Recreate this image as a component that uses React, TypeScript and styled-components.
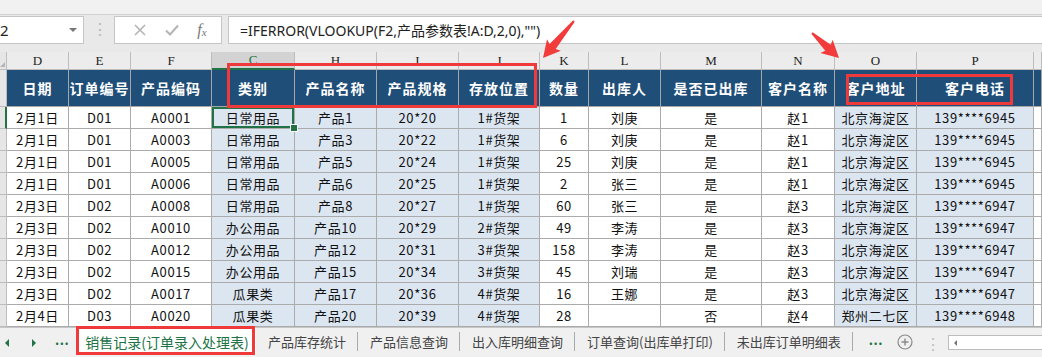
import { Fragment } from "react";
import styled, { createGlobalStyle } from "styled-components";

const GlobalStyle = createGlobalStyle`
  body {
    margin: 0;
    background: #e9e9e9;
    font-family: "Noto Sans", "Noto Sans CJK SC", sans-serif;
  }
`;

type Col = { letter: string; title: string; width: number; tint?: boolean };

const cols: Col[] = [
  { letter: "D", title: "日期", width: 62 },
  { letter: "E", title: "订单编号", width: 62 },
  { letter: "F", title: "产品编码", width: 81 },
  { letter: "C", title: "类别", width: 83, tint: true },
  { letter: "H", title: "产品名称", width: 82, tint: true },
  { letter: "I", title: "产品规格", width: 82, tint: true },
  { letter: "J", title: "存放位置", width: 81, tint: true },
  { letter: "K", title: "数量", width: 49 },
  { letter: "L", title: "出库人", width: 72 },
  { letter: "M", title: "是否已出库", width: 101 },
  { letter: "N", title: "客户名称", width: 73 },
  { letter: "O", title: "客户地址", width: 82, tint: true },
  { letter: "P", title: "客户电话", width: 117, tint: true },
];

const rows: string[][] = [
  ["2月1日", "D01", "A0001", "日常用品", "产品1", "20*20", "1#货架", "1", "刘庚", "是", "赵1", "北京海淀区", "139****6945"],
  ["2月1日", "D01", "A0003", "日常用品", "产品3", "20*22", "1#货架", "6", "刘庚", "是", "赵1", "北京海淀区", "139****6945"],
  ["2月1日", "D01", "A0005", "日常用品", "产品5", "20*24", "1#货架", "25", "刘庚", "是", "赵1", "北京海淀区", "139****6945"],
  ["2月1日", "D01", "A0006", "日常用品", "产品6", "20*25", "1#货架", "2", "张三", "是", "赵1", "北京海淀区", "139****6945"],
  ["2月3日", "D02", "A0008", "日常用品", "产品8", "20*27", "1#货架", "60", "张三", "是", "赵3", "北京海淀区", "139****6947"],
  ["2月3日", "D02", "A0010", "办公用品", "产品10", "20*29", "2#货架", "49", "李涛", "是", "赵3", "北京海淀区", "139****6947"],
  ["2月3日", "D02", "A0012", "办公用品", "产品12", "20*31", "3#货架", "158", "李涛", "是", "赵3", "北京海淀区", "139****6947"],
  ["2月3日", "D02", "A0015", "办公用品", "产品15", "20*34", "3#货架", "45", "刘瑞", "是", "赵3", "北京海淀区", "139****6947"],
  ["2月3日", "D02", "A0017", "瓜果类", "产品17", "20*36", "4#货架", "16", "王娜", "是", "赵3", "北京海淀区", "139****6947"],
  ["2月4日", "D03", "A0020", "瓜果类", "产品20", "20*39", "4#货架", "28", "", "否", "赵4", "郑州二七区", "139****6948"],
];

const tabs = ["产品库存统计", "产品信息查询", "出入库明细查询", "订单查询(出库单打印)", "未出库订单明细表"];

const arrowPoints = (len: number) =>
  [
    [0, -1],
    [len - 15, -4],
    [len - 17, -9],
    [len, 0],
    [len - 17, 9],
    [len - 15, 4],
    [0, 1],
  ]
    .map((p) => p.join(","))
    .join(" ");

const Arrow = ({ x1, y1, x2, y2 }: { x1: number; y1: number; x2: number; y2: number }) => {
  const len = Math.hypot(x2 - x1, y2 - y1);
  const angle = (Math.atan2(y2 - y1, x2 - x1) * 180) / Math.PI;
  return (
    <polygon
      points={arrowPoints(len)}
      fill="#f23b3b"
      transform={`translate(${x1} ${y1}) rotate(${angle})`}
    />
  );
};

const App = () => {
  const template = `7px ${cols.map((c) => c.width + "px").join(" ")} 1fr`;

  return (
    <Page>
      <GlobalStyle />
      <TopStrip />
      <FormulaBar>
        <NameBox>
          <span>2</span>
          <Caret />
        </NameBox>
        <Grip>⋮</Grip>
        <IconBox>
          <svg width="14" height="14" viewBox="0 0 14 14">
            <path d="M2 2L12 12M12 2L2 12" stroke="#b4b4b4" strokeWidth="1.6" />
          </svg>
          <svg width="16" height="14" viewBox="0 0 16 14">
            <path d="M2 7.5L6 11.5L14 2.5" stroke="#b4b4b4" strokeWidth="2" fill="none" />
          </svg>
          <Fx>
            f<sub>x</sub>
          </Fx>
        </IconBox>
        <FormulaInput>=IFERROR(VLOOKUP(F2,产品参数表!A:D,2,0),"")</FormulaInput>
      </FormulaBar>

      <Sheet style={{ gridTemplateColumns: template }}>
        <Corner />
        {cols.map((c) => (
          <ColLetter key={c.letter} $active={c.letter === "C"}>
            {c.letter}
          </ColLetter>
        ))}
        <ColLetter />

        <RowHead />
        {cols.map((c) => (
          <HeadCell key={c.title}>{c.title}</HeadCell>
        ))}
        <HeadCell />

        {rows.map((r, i) => (
          <Fragment key={i}>
            <RowHead $active={i === 0} />
            {r.map((v, j) => (
              <Cell key={j} $tint={cols[j].tint} $selected={i === 0 && j === 3}>
                {v}
              </Cell>
            ))}
            <Cell />
          </Fragment>
        ))}
      </Sheet>

      <TabBar>
        <Nav>
          <NavArrow $dir="left" />
          <NavArrow $dir="right" />
          <NavDots>...</NavDots>
        </Nav>
        <ActiveTab>销售记录(订单录入处理表)</ActiveTab>
        {tabs.map((t) => (
          <Tab key={t}>{t}</Tab>
        ))}
        <TailDots>...</TailDots>
        <AddSheet>
          <svg width="16" height="16" viewBox="0 0 16 16">
            <circle cx="8" cy="8" r="7" fill="none" stroke="#8a8a8a" strokeWidth="1.2" />
            <path d="M8 4.5V11.5M4.5 8H11.5" stroke="#8a8a8a" strokeWidth="1.4" />
          </svg>
        </AddSheet>
        <TabGrip>⋮</TabGrip>
        <ScrollBar>
          <ScrollArrow />
        </ScrollBar>
      </TabBar>

      <Overlay>
        <RedBox style={{ left: 227, top: 63, width: 310, height: 45 }} />
        <RedBox style={{ left: 846, top: 74, width: 167, height: 31 }} />
        <RedBox style={{ left: 76, top: 326, width: 179, height: 29 }} />
        <svg width="1042" height="357">
          <Arrow x1={574} y1={21} x2={543} y2={58} />
          <Arrow x1={812} y1={33} x2={839} y2={58} />
        </svg>
      </Overlay>
    </Page>
  );
};

const Page = styled.div`
  position: relative;
  width: 1042px;
  height: 357px;
  overflow: hidden;
  background: #e9e9e9;
`;

const TopStrip = styled.div`
  height: 14px;
  background: #f1f1f1;
  border-bottom: 1px solid #d0d0d0;
`;

const FormulaBar = styled.div`
  display: flex;
  align-items: center;
  height: 28px;
  margin-bottom: 9px;
`;

const NameBox = styled.div`
  box-sizing: border-box;
  width: 84px;
  height: 28px;
  background: #fff;
  border: 1px solid #c6c6c6;
  border-left: none;
  display: flex;
  align-items: center;
  justify-content: space-between;
  padding-right: 6px;
  font-size: 15px;
  color: #222;
  margin-top: 1px;
`;

const Caret = styled.div`
  width: 0;
  height: 0;
  border-left: 4px solid transparent;
  border-right: 4px solid transparent;
  border-top: 4px solid #777;
`;

const Grip = styled.div`
  width: 14px;
  margin: 0 8px;
  text-align: center;
  color: #b8b8b8;
  font-size: 16px;
`;

const IconBox = styled.div`
  box-sizing: border-box;
  width: 108px;
  height: 28px;
  margin-top: 1px;
  background: #fff;
  border: 1px solid #c6c6c6;
  display: flex;
  align-items: center;
  justify-content: space-around;
  padding: 0 6px 0 10px;
`;

const Fx = styled.span`
  font-family: "Liberation Serif", serif;
  font-style: italic;
  font-size: 16px;
  color: #777;

  sub {
    font-size: 11px;
    vertical-align: -1px;
  }
`;

const FormulaInput = styled.div`
  box-sizing: border-box;
  flex: 1;
  height: 28px;
  margin-top: 1px;
  margin-left: 6px;
  background: #fff;
  border: 1px solid #c6c6c6;
  border-right: none;
  padding-left: 11px;
  display: flex;
  align-items: center;
  font-size: 14px;
  color: #222;
`;

const Sheet = styled.div`
  display: grid;
  grid-template-rows: 18px 37px repeat(10, 22px);
  background: #fff;
`;

const Corner = styled.div`
  background: #e6e6e6;
  border-right: 1px solid #bdbdbd;
  border-bottom: 1px solid #bdbdbd;
  position: relative;

  &::after {
    content: "";
    position: absolute;
    right: 1px;
    bottom: 2px;
    border-left: 5px solid transparent;
    border-bottom: 5px solid #b5b5b5;
  }
`;

const ColLetter = styled.div<{ $active?: boolean }>`
  box-sizing: border-box;
  background: ${(p) => (p.$active ? "#d3d3d3" : "#ececec")};
  border-right: 1px solid #bdbdbd;
  border-bottom: ${(p) => (p.$active ? "2px solid #217346" : "1px solid #bdbdbd")};
  display: flex;
  align-items: center;
  justify-content: center;
  font-family: "Liberation Serif", serif;
  font-size: 13px;
  color: ${(p) => (p.$active ? "#217346" : "#222")};
`;

const RowHead = styled.div<{ $active?: boolean }>`
  box-sizing: border-box;
  background: #e6e6e6;
  border-bottom: 1px solid #bdbdbd;
  border-right: ${(p) => (p.$active ? "2px solid #217346" : "1px solid #bdbdbd")};
`;

const HeadCell = styled.div`
  box-sizing: border-box;
  background: #1f4e79;
  border-right: 1px solid #a6a6a6;
  border-bottom: 1px solid #a6a6a6;
  display: flex;
  align-items: center;
  justify-content: center;
  color: #fff;
  font-family: "Noto Sans CJK SC", sans-serif;
  font-weight: 700;
  font-size: 14px;
  letter-spacing: 1px;
  white-space: nowrap;
`;

const Cell = styled.div<{ $tint?: boolean; $selected?: boolean }>`
  position: relative;
  box-sizing: border-box;
  background: ${(p) => (p.$tint ? "#dce6f1" : "#fff")};
  border-right: 1px solid #ababab;
  border-bottom: 1px solid #ababab;
  display: flex;
  align-items: center;
  justify-content: center;
  font-family: "Noto Sans CJK SC", sans-serif;
  font-size: 13px;
  letter-spacing: 0.6px;
  color: #111;
  white-space: nowrap;
  ${(p) =>
    p.$selected &&
    `
    box-shadow: inset 0 0 0 2px #217346;
    &::after {
      content: "";
      position: absolute;
      right: -4px;
      bottom: -4px;
      width: 6px;
      height: 6px;
      background: #217346;
      border: 1px solid #fff;
      z-index: 2;
    }
  `}
`;

const TabBar = styled.div`
  box-sizing: border-box;
  height: 30px;
  border-top: 1px solid #c6c6c6;
  background: #f0f0f0;
  display: flex;
  align-items: stretch;
  font-family: "Noto Sans CJK SC", sans-serif;
  font-size: 13px;
  color: #444;
`;

const Nav = styled.div`
  width: 78px;
  display: flex;
  align-items: center;
  padding-left: 5px;
  box-sizing: border-box;
  gap: 23px;
`;

const NavArrow = styled.div<{ $dir: "left" | "right" }>`
  width: 0;
  height: 0;
  border-top: 4px solid transparent;
  border-bottom: 4px solid transparent;
  ${(p) =>
    p.$dir === "left"
      ? "border-right: 4px solid #217346;"
      : "border-left: 4px solid #217346;"}
`;

const NavDots = styled.div`
  color: #217346;
  font-weight: 700;
  letter-spacing: 0.5px;
  margin-left: -4px;
  padding-bottom: 6px;
`;

const ActiveTab = styled.div`
  width: 178px;
  background: #fff;
  display: flex;
  align-items: center;
  justify-content: center;
  color: #217346;
  font-size: 14px;
  margin-bottom: 2px;
`;

const Tab = styled.div`
  display: flex;
  align-items: center;
  padding: 0 11px 0 12px;
  margin: 4px 0 6px;
  border-right: 1px solid #aaa;
  white-space: nowrap;
`;

const TailDots = styled.div`
  display: flex;
  align-items: center;
  color: #217346;
  font-weight: 700;
  letter-spacing: 0.5px;
  padding: 0 14px 6px 16px;
`;

const AddSheet = styled.div`
  display: flex;
  align-items: center;
  padding-bottom: 2px;
`;

const TabGrip = styled.div`
  display: flex;
  align-items: center;
  justify-content: center;
  width: 14px;
  margin: 0 8px 0 13px;
  color: #c0c0c0;
  font-size: 16px;
`;

const ScrollBar = styled.div`
  box-sizing: border-box;
  flex: 1;
  height: 15px;
  margin-top: 7px;
  background: #fff;
  border: 1px solid #bdbdbd;
  border-right: none;
  display: flex;
  align-items: center;
  padding-left: 5px;
`;

const ScrollArrow = styled.div`
  width: 0;
  height: 0;
  border-top: 3px solid transparent;
  border-bottom: 3px solid transparent;
  border-right: 3px solid #777;
`;

const Overlay = styled.div`
  position: absolute;
  inset: 0;
  pointer-events: none;

  svg {
    position: absolute;
    left: 0;
    top: 0;
  }
`;

const RedBox = styled.div`
  position: absolute;
  box-sizing: border-box;
  border: 3px solid #f0393b;
`;

export default App;
